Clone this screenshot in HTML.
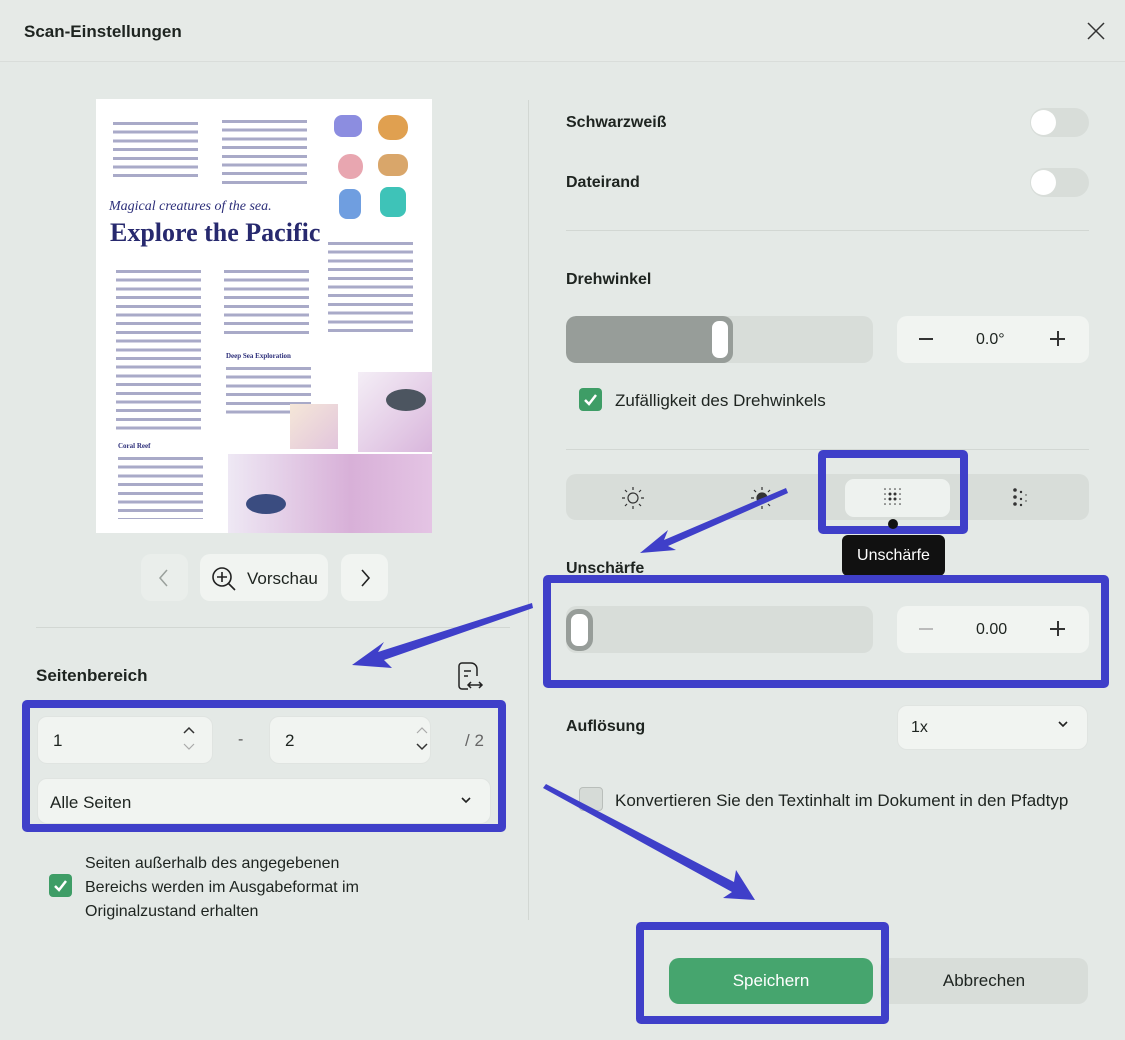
<!DOCTYPE html>
<html><head><meta charset="utf-8">
<style>
*{box-sizing:border-box;margin:0;padding:0}
body{width:1125px;height:1040px;background:#e4e9e6;font-family:"Liberation Sans",sans-serif;color:#1e2420;position:relative;overflow:hidden}
.a{position:absolute}
.b{font-weight:bold;font-size:17px}
.t{font-size:16px}
.box{border:8px solid #3f3fc9;border-radius:5px;position:absolute}
.inp{position:absolute;background:#f1f4f1;border:1px solid #e0e4e1;border-radius:10px}
.hr{position:absolute;height:1px;background:#d2d7d3}
.tog{position:absolute;width:59px;height:29px;border-radius:15px;background:#d8ddd9}
.tog:after{content:"";position:absolute;left:1px;top:2px;width:25px;height:25px;border-radius:50%;background:#fff}
.chk{position:absolute;width:23px;height:23px;border-radius:4px;background:#3e9d66}
.lines{position:absolute;background:repeating-linear-gradient(#fff 0 3px,#a9aac8 3px 6px,#fff 6px 8.7px)}
</style></head><body>
<div class="a" style="left:0;top:0;width:1125px;height:62px;background:#e6eae7;border-bottom:1px solid #d9ddda"></div>
<div class="a b" style="left:24px;top:22px">Scan-Einstellungen</div>
<svg class="a" style="left:1086px;top:21px" width="20" height="20"><path d="M2 2L18 18M18 2L2 18" stroke="#333" stroke-width="1.5"/></svg>
<div class="a" style="left:528px;top:100px;width:1px;height:820px;background:#d2d7d3"></div>

<!-- document preview -->
<div class="a" style="left:96px;top:99px;width:336px;height:434px;background:#fff;overflow:hidden">
 <div class="lines" style="left:17px;top:20px;width:85px;height:60px"></div>
 <div class="lines" style="left:126px;top:18px;width:85px;height:70px"></div>
 <div class="a" style="left:238px;top:16px;width:28px;height:22px;background:#8c8de0;border-radius:8px"></div>
 <div class="a" style="left:282px;top:16px;width:30px;height:25px;background:#e0a050;border-radius:12px"></div>
 <div class="a" style="left:242px;top:55px;width:25px;height:25px;background:#e8a6b0;border-radius:12px"></div>
 <div class="a" style="left:282px;top:55px;width:30px;height:22px;background:#d9a66a;border-radius:10px"></div>
 <div class="a" style="left:243px;top:90px;width:22px;height:30px;background:#6f9ee0;border-radius:8px"></div>
 <div class="a" style="left:284px;top:88px;width:26px;height:30px;background:#3ec3b8;border-radius:8px"></div>
 <div class="a" style="left:13px;top:100px;font-family:'Liberation Serif',serif;font-style:italic;font-size:14px;color:#2d2f7a">Magical creatures of the sea.</div>
 <div class="a" style="left:14px;top:119px;font-family:'Liberation Serif',serif;font-weight:bold;font-size:26px;color:#27296e">Explore the Pacific</div>
 <div class="lines" style="left:232px;top:140px;width:85px;height:95px"></div>
 <div class="lines" style="left:20px;top:168px;width:85px;height:165px"></div>
 <div class="lines" style="left:128px;top:168px;width:85px;height:70px"></div>
 <div class="a" style="left:130px;top:253px;font-family:'Liberation Serif',serif;font-weight:bold;font-size:7px;color:#2d2f7a">Deep Sea Exploration</div>
 <div class="lines" style="left:130px;top:265px;width:85px;height:50px"></div>
 <div class="a" style="left:22px;top:343px;font-family:'Liberation Serif',serif;font-weight:bold;font-size:7px;color:#2d2f7a">Coral Reef</div>
 <div class="lines" style="left:22px;top:355px;width:85px;height:65px"></div>
 <div class="a" style="left:262px;top:273px;width:74px;height:80px;background:linear-gradient(135deg,#f4eef6,#d9b6dc)"></div>
 <div class="a" style="left:194px;top:305px;width:48px;height:45px;background:linear-gradient(135deg,#f5e7d8,#e2c5dc)"></div>
 <div class="a" style="left:132px;top:355px;width:204px;height:79px;background:linear-gradient(90deg,#eee8f4,#d8b0d8 60%,#e4c4e4)"></div>
 <div class="a" style="left:290px;top:290px;width:40px;height:22px;background:#4c5560;border-radius:50%"></div>
 <div class="a" style="left:150px;top:395px;width:40px;height:20px;background:#3a4c80;border-radius:50%"></div>
</div>

<!-- preview nav -->
<div class="inp" style="left:141px;top:554px;width:47px;height:47px;border:none;background:#eaeeeb"></div>
<svg class="a" style="left:157px;top:568px" width="14" height="20"><path d="M10 2L3 10L10 18" fill="none" stroke="#9aa09c" stroke-width="1.5"/></svg>
<div class="inp" style="left:200px;top:554px;width:128px;height:47px;border:none"></div>
<svg class="a" style="left:210px;top:565px" width="28" height="28"><circle cx="12" cy="12" r="9" fill="none" stroke="#222" stroke-width="1.6"/><path d="M12 7v10M7 12h10M18.5 18.5L25 25" stroke="#222" stroke-width="1.6"/></svg>
<div class="a" style="left:247px;top:569px;font-size:17px">Vorschau</div>
<div class="inp" style="left:341px;top:554px;width:47px;height:47px;border:none"></div>
<svg class="a" style="left:358px;top:568px" width="14" height="20"><path d="M4 2L11 10L4 18" fill="none" stroke="#222" stroke-width="1.6"/></svg>
<div class="hr" style="left:36px;top:627px;width:474px"></div>

<div class="a b" style="left:36px;top:666px">Seitenbereich</div>
<svg class="a" style="left:454px;top:661px" width="32" height="32"><path d="M14 28H8a3 3 0 0 1-3-3V5a3 3 0 0 1 3-3h9a6 6 0 0 1 6 6v7" fill="none" stroke="#222" stroke-width="1.5"/><path d="M10 10h7M10 15h4M14 24h14M17 21l-3 3 3 3M25 21l3 3-3 3" fill="none" stroke="#222" stroke-width="1.5"/></svg>
<div class="inp" style="left:37px;top:716px;width:176px;height:48px"></div>
<div class="a t" style="left:53px;top:731px;font-size:17px">1</div>
<svg class="a" style="left:182px;top:725px" width="14" height="28"><path d="M2 8L7 3L12 8" fill="none" stroke="#333" stroke-width="1.5"/><path d="M2 19L7 24L12 19" fill="none" stroke="#aaa" stroke-width="1.2"/></svg>
<div class="a t" style="left:238px;top:731px;color:#555">-</div>
<div class="inp" style="left:269px;top:716px;width:162px;height:48px"></div>
<div class="a t" style="left:285px;top:731px;font-size:17px">2</div>
<svg class="a" style="left:415px;top:725px" width="14" height="28"><path d="M2 8L7 3L12 8" fill="none" stroke="#aaa" stroke-width="1.2"/><path d="M2 19L7 24L12 19" fill="none" stroke="#333" stroke-width="1.5"/></svg>
<div class="a t" style="left:465px;top:731px;color:#666;font-size:17px">/ 2</div>
<div class="inp" style="left:37px;top:778px;width:454px;height:46px"></div>
<div class="a t" style="left:50px;top:793px;font-size:17px">Alle Seiten</div>
<svg class="a" style="left:460px;top:796px" width="12" height="10"><path d="M2 2L6 6L10 2" fill="none" stroke="#222" stroke-width="1.6"/></svg>
<div class="box" style="left:22px;top:700px;width:484px;height:132px"></div>

<div class="chk" style="left:49px;top:874px"></div>
<svg class="a" style="left:52px;top:877px" width="17" height="17"><path d="M3 9L7 13L14 4" fill="none" stroke="#fff" stroke-width="2.5"/></svg>
<div class="a t" style="left:85px;top:852px;line-height:24px">Seiten außerhalb des angegebenen<br>Bereichs werden im Ausgabeformat im<br>Originalzustand erhalten</div>

<!-- right -->
<div class="a b" style="left:566px;top:114px;font-size:16px">Schwarzweiß</div>
<div class="tog" style="left:1030px;top:108px"></div>
<div class="a b" style="left:566px;top:174px;font-size:16px">Dateirand</div>
<div class="tog" style="left:1030px;top:168px"></div>
<div class="hr" style="left:566px;top:230px;width:523px"></div>
<div class="a b" style="left:566px;top:271px;font-size:16px">Drehwinkel</div>
<div class="a" style="left:566px;top:316px;width:307px;height:47px;border-radius:10px;background:#d8ddd9;overflow:hidden"><div style="width:167px;height:47px;background:#979d99;border-radius:10px"></div></div>
<div class="a" style="left:712px;top:321px;width:16px;height:37px;border-radius:7px;background:#fff"></div>
<div class="inp" style="left:897px;top:316px;width:192px;height:47px;border:none"></div>
<div class="a" style="left:919px;top:338px;width:14px;height:1.5px;background:#333"></div>
<div class="a t" style="left:976px;top:331px">0.0°</div>
<div class="a" style="left:1050px;top:338px;width:15px;height:1.5px;background:#333"></div>
<div class="a" style="left:1057px;top:331px;width:1.5px;height:15px;background:#333"></div>
<div class="chk" style="left:579px;top:388px"></div>
<svg class="a" style="left:582px;top:391px" width="17" height="17"><path d="M3 9L7 13L14 4" fill="none" stroke="#fff" stroke-width="2.5"/></svg>
<div class="a t" style="left:615px;top:391px;font-size:17px">Zufälligkeit des Drehwinkels</div>
<div class="hr" style="left:566px;top:449px;width:523px"></div>

<div class="a" style="left:566px;top:474px;width:523px;height:46px;border-radius:10px;background:#d8ddd9"></div>
<div class="a" style="left:845px;top:479px;width:105px;height:38px;border-radius:9px;background:#eef2ef"></div>
<svg class="a" style="left:620px;top:485px" width="26" height="26"><circle cx="13" cy="13" r="5" fill="none" stroke="#333" stroke-width="1.2"/><path d="M13 2v3M13 21v3M2 13h3M21 13h3M5 5l2 2M19 19l2 2M5 21l2-2M19 7l2-2" stroke="#333" stroke-width="1.2"/></svg>
<svg class="a" style="left:749px;top:485px" width="26" height="26"><circle cx="13" cy="13" r="5" fill="#333" stroke="#333" stroke-width="1.2"/><path d="M13 2v3M13 21v3M2 13h3M21 13h3M5 5l2 2M19 19l2 2M5 21l2-2M19 7l2-2" stroke="#333" stroke-width="1.2"/></svg>
<svg class="a" style="left:881px;top:486px" width="24" height="24" fill="#333"><circle cx="4" cy="3" r=".8"/><circle cx="9" cy="3" r=".8"/><circle cx="14" cy="3" r=".8"/><circle cx="19" cy="3" r=".8"/><circle cx="4" cy="8" r=".8"/><circle cx="9" cy="8" r="1.5"/><circle cx="14" cy="8" r="1.5"/><circle cx="19" cy="8" r=".8"/><circle cx="4" cy="13" r=".8"/><circle cx="9" cy="13" r="1.5"/><circle cx="14" cy="13" r="1.5"/><circle cx="19" cy="13" r=".8"/><circle cx="4" cy="18" r=".8"/><circle cx="9" cy="18" r=".8"/><circle cx="14" cy="18" r=".8"/><circle cx="19" cy="18" r=".8"/></svg>
<svg class="a" style="left:1010px;top:486px" width="22" height="24" fill="#333"><circle cx="5" cy="4" r="1.8"/><circle cx="5" cy="11" r="1.8"/><circle cx="5" cy="18" r="1.8"/><circle cx="11" cy="6" r="1.2"/><circle cx="11" cy="13" r="1.2"/><circle cx="11" cy="19" r="1.2"/><circle cx="16" cy="9" r=".7"/><circle cx="16" cy="15" r=".7"/></svg>
<div class="box" style="left:818px;top:450px;width:150px;height:84px"></div>
<div class="a" style="left:888px;top:519px;width:10px;height:10px;border-radius:50%;background:#111"></div>
<div class="a" style="left:842px;top:535px;width:103px;height:41px;border-radius:6px;background:#111;color:#fff;font-size:16px;text-align:center;line-height:41px">Unschärfe</div>

<div class="a b" style="left:566px;top:560px;font-size:16px">Unschärfe</div>
<div class="a" style="left:566px;top:606px;width:307px;height:47px;border-radius:10px;background:#d8ddd9"></div>
<div class="a" style="left:566px;top:609px;width:27px;height:42px;border-radius:12px;background:#fff;border:5px solid #979d99"></div>
<div class="inp" style="left:897px;top:606px;width:192px;height:47px;border:none"></div>
<div class="a" style="left:919px;top:628px;width:14px;height:1.5px;background:#bbb"></div>
<div class="a t" style="left:976px;top:621px">0.00</div>
<div class="a" style="left:1050px;top:628px;width:15px;height:1.5px;background:#333"></div>
<div class="a" style="left:1057px;top:621px;width:1.5px;height:15px;background:#333"></div>
<div class="box" style="left:543px;top:575px;width:566px;height:113px"></div>

<div class="a b" style="left:566px;top:718px;font-size:16px">Auflösung</div>
<div class="inp" style="left:897px;top:705px;width:191px;height:45px"></div>
<div class="a t" style="left:911px;top:719px">1x</div>
<svg class="a" style="left:1057px;top:720px" width="12" height="10"><path d="M2 2L6 6L10 2" fill="none" stroke="#222" stroke-width="1.6"/></svg>
<div class="a" style="left:579px;top:787px;width:24px;height:24px;border-radius:4px;border:1.5px solid #b9beba;background:#d6dbd7"></div>
<div class="a t" style="left:615px;top:791px;font-size:17px">Konvertieren Sie den Textinhalt im Dokument in den Pfadtyp</div>

<div class="a" style="left:880px;top:958px;width:208px;height:46px;border-radius:10px;background:#d8ddd9;text-align:center;line-height:46px;font-size:17px">Abbrechen</div>
<div class="a" style="left:669px;top:958px;width:204px;height:46px;border-radius:10px;background:#46a56e;color:#fff;text-align:center;line-height:46px;font-size:17px">Speichern</div>
<div class="box" style="left:636px;top:922px;width:253px;height:102px"></div>

<svg class="a" style="left:0;top:0" width="1125" height="1040">
<g fill="#3f3fc9">
<path d="M786 488L664 540L668 530L640 553L676 550L668 546L788 493Z"/>
<path d="M532 603L378 652L384 642L352 665L392 668L384 660L533 608Z"/>
<path d="M543 788L732 892L723 898L755 900L736 870L734 882L546 784Z"/>
</g>
</svg>
</body></html>
